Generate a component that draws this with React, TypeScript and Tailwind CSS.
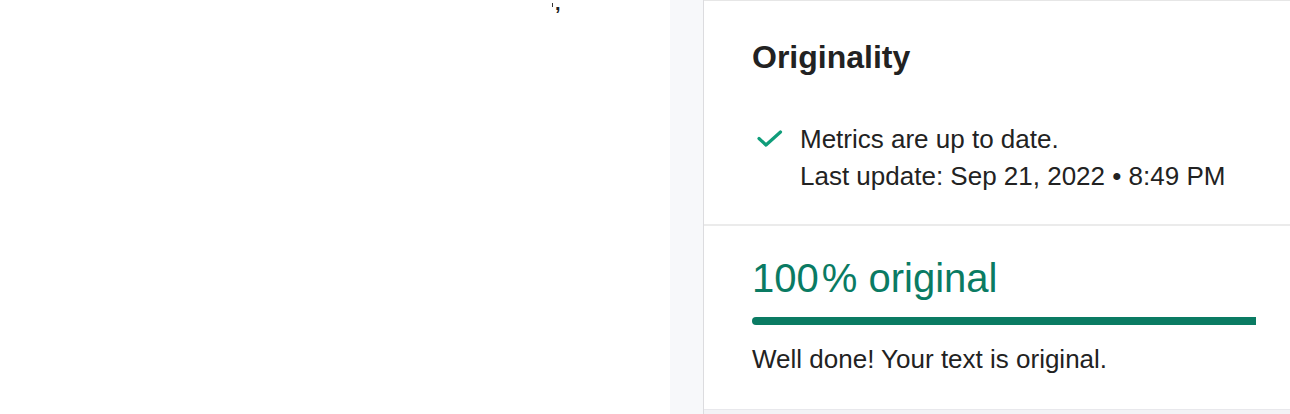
import React from "react"

const CheckIcon = () => (
    <svg width="26" height="18" viewBox="0 0 26 18" fill="none" className="shrink-0">
        <path d="M2 8.5 L9 15 L23.5 2" stroke="#0f9d7a" strokeWidth="3.2" strokeLinecap="round" strokeLinejoin="round" />
    </svg>
)

const App = () => {
    return (
        <div
            className="flex w-full h-[414px] overflow-hidden bg-white text-[#222222]"
            style={{ fontFamily: '"Liberation Sans", Arial, sans-serif' }}
        >
            {/* document area, only a clipped glyph peeks in at the top */}
            <div className="w-[670px] shrink-0 bg-white">
                <div className="flex items-start pl-[552px]">
                    <span className="mt-[3px] w-px h-[4px] bg-[#333]" />
                    <span className="-mt-[7px] ml-[2px] text-[20px] leading-[20px] font-bold">,</span>
                </div>
            </div>

            <div className="w-[34px] shrink-0 bg-[#f7f8fa] border-r border-[#dcdcdf]" />

            <div className="flex-1 flex flex-col">
                <div className="bg-white border-t border-[#e6e6e6] pl-[48px] pr-[34px] pt-[36px] pb-[29px]">
                    <h2 className="text-[32px] leading-[40px] font-bold text-[#222222]">Originality</h2>
                    <div className="flex mt-[44px]">
                        <div className="w-[48px] pl-[5px] pt-[9px]">
                            <CheckIcon />
                        </div>
                        <div className="text-[26px] leading-[37px]">
                            <p>Metrics are up to date.</p>
                            <p>Last update: Sep 21, 2022 • 8:49 PM</p>
                        </div>
                    </div>
                </div>

                <div className="bg-white border-t-2 border-[#ebebeb] pl-[48px] pr-[34px] pt-[28px] pb-[32px]">
                    <p className="text-[40px] leading-[48px] text-[#0a7b63]">
                        100<span className="ml-[3px]">%</span> original
                    </p>
                    <div className="mt-[15px] h-[8px] w-[504px] rounded-l-full bg-[#0a7b63]" />
                    <p className="mt-[16px] text-[26px] leading-[36px] text-[#222222]">
                        Well done! Your text is original.
                    </p>
                </div>

                <div className="flex-1 bg-[#f3f3f6] border-t border-[#e8e8ec]" />
            </div>
        </div>
    )
}

export default App
